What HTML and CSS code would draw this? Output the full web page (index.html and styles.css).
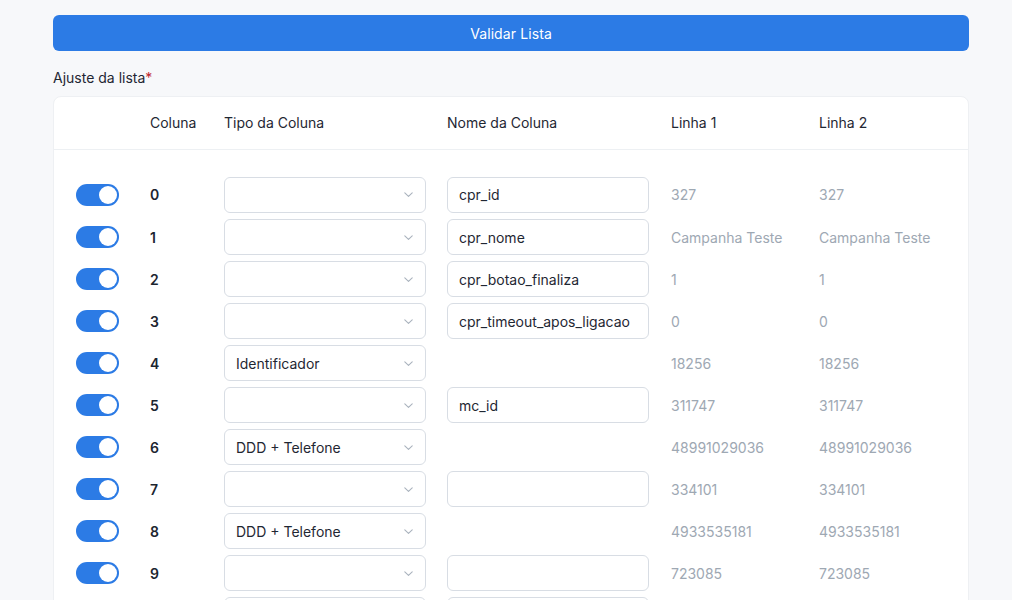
FILE: index.html
```html
<!DOCTYPE html>
<html lang="pt">
<head>
<meta charset="utf-8">
<link rel="stylesheet" href="styles.css">
</head>
<body>
<div class="page">
  <button class="btn-primary">Validar Lista</button>
  <div class="label">Ajuste da lista<span class="req">*</span></div>
  <div class="card">
    <div class="grid head">
      <div></div>
      <div>Coluna</div>
      <div>Tipo da Coluna</div>
      <div>Nome da Coluna</div>
      <div>Linha 1</div>
      <div>Linha 2</div>
    </div>
    <div class="body" id="rows"></div>
  </div>
</div>
<script src="app.js"></script>
</body>
</html>
```
FILE: app.js
```js
const rows = [
  ["", "cpr_id", "327", "327"],
  ["", "cpr_nome", "Campanha Teste", "Campanha Teste"],
  ["", "cpr_botao_finaliza", "1", "1"],
  ["", "cpr_timeout_apos_ligacao", "0", "0"],
  ["Identificador", null, "18256", "18256"],
  ["", "mc_id", "311747", "311747"],
  ["DDD + Telefone", null, "48991029036", "48991029036"],
  ["", "", "334101", "334101"],
  ["DDD + Telefone", null, "4933535181", "4933535181"],
  ["", "", "723085", "723085"],
  ["", "", "", ""]
];
const chevron = '<svg class="chev" width="9" height="5" viewBox="0 0 9 5"><path d="M0.8 0.8l3.7 3.5 3.7-3.5" fill="none" stroke="#a9b2bd" stroke-width="1.1" stroke-linecap="round" stroke-linejoin="round"/></svg>';
const host = document.getElementById("rows");
host.innerHTML = rows.map((r, i) => `
  <div class="grid row">
    <div><span class="toggle"><span class="knob"></span></span></div>
    <div class="idx">${i < 10 ? i : ""}</div>
    <div><div class="select"><span>${r[0]}</span>${chevron}</div></div>
    <div>${r[1] === null ? "" : `<div class="input">${r[1]}</div>`}</div>
    <div class="val">${r[2]}</div>
    <div class="val">${r[3]}</div>
  </div>`).join("");
```
FILE: styles.css
```css
* { box-sizing: border-box; }
html, body { margin: 0; padding: 0; }
body {
  background: #f7f8fa;
  font-family: Inter, "Noto Sans", sans-serif;
  font-size: 14px;
  color: #1f2733;
}
.page {
  padding: 15px 43px 0 53px;
}
.btn-primary {
  display: block;
  width: 100%;
  height: 36px;
  border: 0;
  border-radius: 6px;
  background: #2c7be5;
  color: #ffffff;
  font-family: inherit;
  font-size: 14px;
  letter-spacing: 0.1px;
}
.label {
  margin-top: 17px;
  line-height: 20px;
  color: #1f2733;
}
.req { color: #c0282e; }
.card {
  margin-top: 8px;
  background: #ffffff;
  border: 1px solid #eef0f3;
  border-radius: 8px;
  overflow: hidden;
}
.grid {
  display: grid;
  grid-template-columns: 74px 74px 223px 224px 148px 1fr;
  padding-left: 22px;
  align-items: center;
}
.head {
  height: 53px;
  padding-bottom: 2px;
  border-bottom: 1px solid #edf0f3;
  color: #1f2733;
}
.body {
  padding-top: 23px;
}
.row {
  height: 42px;
}
.row:first-child { height: 43px; }
.toggle {
  display: flex;
  justify-content: flex-end;
  align-items: center;
  width: 43px;
  height: 22px;
  border-radius: 11px;
  background: #2c7be5;
  padding: 2px;
}
.knob {
  width: 18px;
  height: 18px;
  border-radius: 50%;
  background: #ffffff;
}
.idx {
  font-weight: 600;
  color: #1c2530;
}
.select, .input {
  width: 202px;
  height: 36px;
  border: 1px solid #d8dde4;
  border-radius: 6px;
  background: #ffffff;
  display: flex;
  align-items: center;
  padding: 0 12px 0 11px;
  color: #1f2733;
}
.select {
  justify-content: space-between;
  padding-right: 12px;
}
.val {
  color: #9ea8b3;
}
```
